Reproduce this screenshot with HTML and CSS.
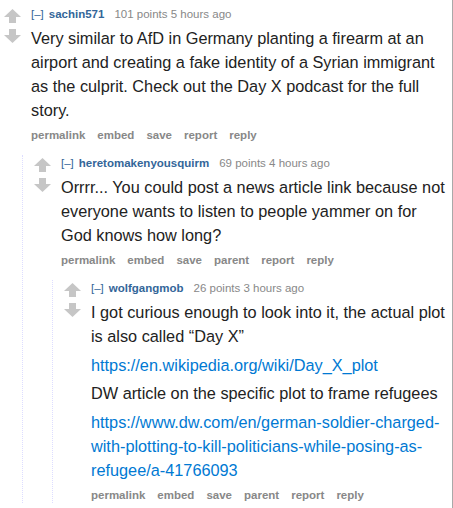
FILE: index.html
```html
<!DOCTYPE html>
<html>
<head>
<meta charset="utf-8">
<link rel="stylesheet" href="styles.css">
</head>
<body>
<div class="page">
  <div class="comment">
    <div class="midcol">
      <svg class="arrow" viewBox="0 0 17 14" width="17" height="14"><polygon points="8.5,0 17,8 12,8 12,14 5,14 5,8 0,8"/></svg>
      <svg class="arrow" viewBox="0 0 17 14" width="17" height="14"><polygon points="5,0 12,0 12,6 17,6 8.5,14 0,6 5,6"/></svg>
    </div>
    <div class="entry">
      <p class="tagline"><span class="expand">[–]</span><span class="author">sachin571</span><span class="score">101 points 5 hours ago</span></p>
      <div class="md">
        <p>Very similar to AfD in Germany planting a firearm at an airport and creating a fake identity of a Syrian immigrant as the culprit. Check out the Day X podcast for the full story.</p>
      </div>
      <ul class="buttons"><li>permalink</li><li>embed</li><li>save</li><li>report</li><li>reply</li></ul>

      <div class="child">
        <div class="comment">
          <div class="midcol">
            <svg class="arrow" viewBox="0 0 17 14" width="17" height="14"><polygon points="8.5,0 17,8 12,8 12,14 5,14 5,8 0,8"/></svg>
            <svg class="arrow" viewBox="0 0 17 14" width="17" height="14"><polygon points="5,0 12,0 12,6 17,6 8.5,14 0,6 5,6"/></svg>
          </div>
          <div class="entry">
            <p class="tagline"><span class="expand">[–]</span><span class="author">heretomakenyousquirm</span><span class="score">69 points 4 hours ago</span></p>
            <div class="md">
              <p>Orrrr... You could post a news article link because not everyone wants to listen to people yammer on for God knows how long?</p>
            </div>
            <ul class="buttons"><li>permalink</li><li>embed</li><li>save</li><li>parent</li><li>report</li><li>reply</li></ul>

            <div class="child">
              <div class="comment">
                <div class="midcol">
                  <svg class="arrow" viewBox="0 0 17 14" width="17" height="14"><polygon points="8.5,0 17,8 12,8 12,14 5,14 5,8 0,8"/></svg>
                  <svg class="arrow" viewBox="0 0 17 14" width="17" height="14"><polygon points="5,0 12,0 12,6 17,6 8.5,14 0,6 5,6"/></svg>
                </div>
                <div class="entry">
                  <p class="tagline"><span class="expand">[–]</span><span class="author">wolfgangmob</span><span class="score">26 points 3 hours ago</span></p>
                  <div class="md">
                    <p>I got curious enough to look into it, the actual plot is also called “Day X”</p>
                    <p><a href="#">https://en.wikipedia.org/wiki/Day_X_plot</a></p>
                    <p>DW article on the specific plot to frame refugees</p>
                    <p><a href="#">https://www.dw.com/en/german-soldier-charged-with-plotting-to-kill-politicians-while-posing-as-refugee/a-41766093</a></p>
                  </div>
                  <ul class="buttons"><li>permalink</li><li>embed</li><li>save</li><li>parent</li><li>report</li><li>reply</li></ul>
                </div>
              </div>
            </div>
          </div>
        </div>
      </div>
    </div>
  </div>
</div>
</body>
</html>
```
FILE: styles.css
```css
html, body {
  margin: 0;
  padding: 0;
  background: #fff;
}
body {
  font-family: "Liberation Sans", Arial, sans-serif;
  color: #222;
}
.page {
  width: 453px;
  height: 508px;
  padding: 6px 6px 0 4px;
  box-sizing: border-box;
  border-right: 1px solid #a9a9a9;
  overflow: hidden;
}
.comment {
  display: flex;
  align-items: flex-start;
}
.midcol {
  flex: 0 0 17px;
  width: 17px;
  margin-right: 10px;
  padding-top: 3px;
  display: flex;
  flex-direction: column;
  gap: 6px;
}
.arrow {
  display: block;
  fill: #c6c6c6;
}
.entry {
  flex: 1 1 auto;
  min-width: 0;
}
.tagline {
  margin: 0;
  font-size: 11.5px;
  line-height: 16px;
  color: #888;
  white-space: nowrap;
}
.expand {
  color: #369;
  margin-right: 5px;
}
.author {
  color: #369;
  font-weight: bold;
  margin-right: 10px;
}
.md {
  margin-top: 4px;
  font-size: 16.3px;
  line-height: 24px;
  color: #222;
  display: flex;
  flex-direction: column;
  gap: 4.5px;
}
.md p {
  margin: 0;
}
.md a {
  color: #0079d3;
  text-decoration: none;
}
.buttons {
  list-style: none;
  margin: 5px 0 0;
  padding: 0;
  display: flex;
  gap: 12px;
  font-size: 11.5px;
  line-height: 16px;
  font-weight: bold;
  color: #888;
}
.child {
  margin-top: 12px;
  margin-left: -9px;
  border-left: 1px dotted #ddf;
  padding-left: 11px;
}
```
